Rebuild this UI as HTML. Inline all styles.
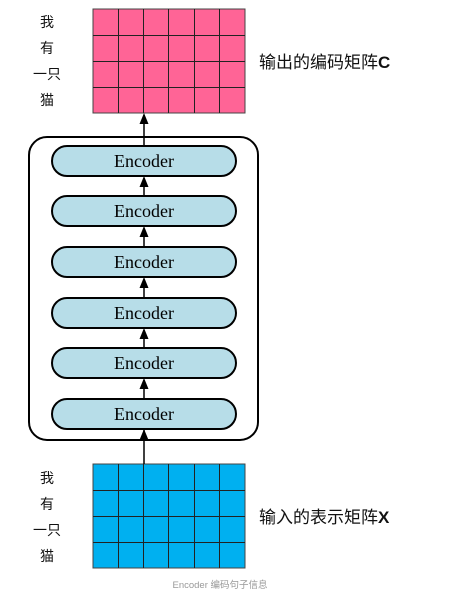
<!DOCTYPE html>
<html><head><meta charset="utf-8"><style>
body{margin:0;background:#fff;width:473px;height:593px;overflow:hidden;font-family:"Liberation Sans","Noto Sans CJK SC",sans-serif}
</style></head><body>
<svg width="473" height="593" xmlns="http://www.w3.org/2000/svg">
<rect x="93" y="9" width="152" height="104" fill="#ff6496" stroke="#444"/>
<g stroke="#222" stroke-width="1">
<line x1="118.5" y1="9" x2="118.5" y2="113"/><line x1="143.5" y1="9" x2="143.5" y2="113"/><line x1="168.5" y1="9" x2="168.5" y2="113"/><line x1="194.5" y1="9" x2="194.5" y2="113"/><line x1="219.5" y1="9" x2="219.5" y2="113"/>
<line x1="93" y1="35.5" x2="245" y2="35.5"/><line x1="93" y1="61.5" x2="245" y2="61.5"/><line x1="93" y1="87.5" x2="245" y2="87.5"/>
</g>
<rect x="93" y="464" width="152" height="104" fill="#00b0f0" stroke="#444"/>
<g stroke="#222" stroke-width="1">
<line x1="118.5" y1="464" x2="118.5" y2="568"/><line x1="143.5" y1="464" x2="143.5" y2="568"/><line x1="168.5" y1="464" x2="168.5" y2="568"/><line x1="194.5" y1="464" x2="194.5" y2="568"/><line x1="219.5" y1="464" x2="219.5" y2="568"/>
<line x1="93" y1="490.5" x2="245" y2="490.5"/><line x1="93" y1="516.5" x2="245" y2="516.5"/><line x1="93" y1="542.5" x2="245" y2="542.5"/>
</g>
<rect x="29" y="137" width="229" height="303" rx="18" fill="none" stroke="#000" stroke-width="2"/>
<g stroke="#000" stroke-width="1.5">
<line x1="144" y1="464" x2="144" y2="430"/>
<line x1="144" y1="398" x2="144" y2="380"/>
<line x1="144" y1="348" x2="144" y2="330"/>
<line x1="144" y1="297" x2="144" y2="279"/>
<line x1="144" y1="247" x2="144" y2="229"/>
<line x1="144" y1="196" x2="144" y2="178"/>
<line x1="144" y1="145" x2="144" y2="115"/>
</g>
<g fill="#000">
<polygon points="144,113 139.5,124 148.5,124"/>
<polygon points="144,176 139.5,187 148.5,187"/>
<polygon points="144,226 139.5,237 148.5,237"/>
<polygon points="144,277 139.5,288 148.5,288"/>
<polygon points="144,328 139.5,339 148.5,339"/>
<polygon points="144,378 139.5,389 148.5,389"/>
<polygon points="144,429 139.5,440 148.5,440"/>
</g>
<g font-family="Liberation Serif,serif" font-size="18" text-anchor="middle">
<g fill="#b7dde8" stroke="#000" stroke-width="2">
<rect x="52" y="146" width="184" height="30" rx="15"/>
<rect x="52" y="196" width="184" height="30" rx="15"/>
<rect x="52" y="247" width="184" height="30" rx="15"/>
<rect x="52" y="298" width="184" height="30" rx="15"/>
<rect x="52" y="348" width="184" height="30" rx="15"/>
<rect x="52" y="399" width="184" height="30" rx="15"/>
</g>
<text x="144" y="167">Encoder</text><text x="144" y="217">Encoder</text><text x="144" y="268">Encoder</text><text x="144" y="319">Encoder</text><text x="144" y="369">Encoder</text><text x="144" y="420">Encoder</text>
</g>
<g font-size="14" text-anchor="middle" fill="#111">
<text x="47" y="27">我</text><text x="47" y="53">有</text><text x="47" y="79">一只</text><text x="47" y="105">猫</text>
<text x="47" y="483">我</text><text x="47" y="509">有</text><text x="47" y="535">一只</text><text x="47" y="561">猫</text>
</g>
<g font-size="17" fill="#111">
<text x="259" y="68">输出的编码矩阵<tspan font-weight="bold">C</tspan></text>
<text x="259" y="523">输入的表示矩阵<tspan font-weight="bold">X</tspan></text>
</g>
<text x="220" y="588" font-size="9.5" fill="#999" text-anchor="middle">Encoder 编码句子信息</text>
</svg>
</body></html>
